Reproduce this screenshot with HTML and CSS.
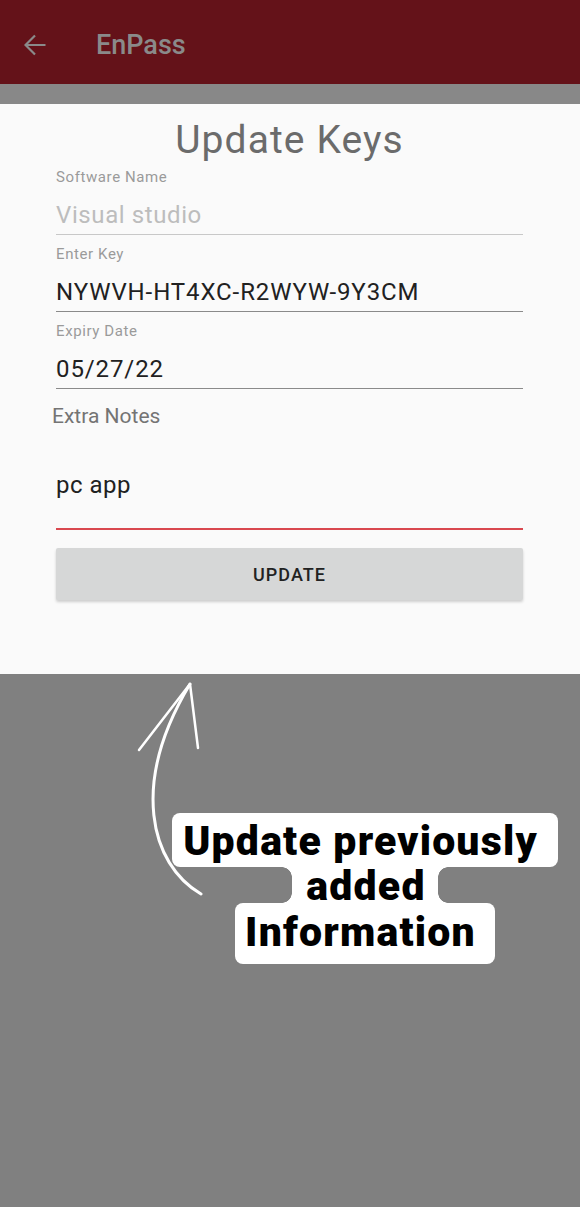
FILE: index.html
```html
<!DOCTYPE html>
<html>
<head>
<meta charset="utf-8">
<link rel="stylesheet" href="styles.css">
</head>
<body>
<div class="screen">
  <header class="appbar">
    <svg class="back" width="22" height="22" viewBox="0 0 22 22"><path d="M21.5 11H2M11 1.5L1.5 11l9.5 9.5" fill="none" stroke="#8a8a8a" stroke-width="2.2"/></svg>
    <span class="appbar-title">EnPass</span>
  </header>
  <div class="band"></div>
  <main class="card">
    <h1 class="title">Update Keys</h1>
    <div class="field">
      <div class="label">Software Name</div>
      <div class="value hint">Visual studio</div>
    </div>
    <div class="field">
      <div class="label">Enter Key</div>
      <div class="value">NYWVH-HT4XC-R2WYW-9Y3CM</div>
    </div>
    <div class="field">
      <div class="label">Expiry Date</div>
      <div class="value">05/27/22</div>
    </div>
    <div class="notes-label">Extra Notes</div>
    <div class="notes-value">pc app</div>
    <button class="btn">UPDATE</button>
  </main>
  <section class="backdrop">
    <svg class="pointer" width="580" height="533" viewBox="0 0 580 533">
      <path d="M201 220 C150 190, 130 110, 190 10" fill="none" stroke="#fff" stroke-width="3" stroke-linecap="round"/>
      <path d="M190 10 L139 76 M190 10 L198 74" fill="none" stroke="#fff" stroke-width="2.5" stroke-linecap="round"/>
    </svg>
    <div class="callout">
      <span class="line l1">Update previously</span>
      <span class="line l2">added</span>
      <span class="line l3">Information</span>
    </div>
  </section>
</div>
</body>
</html>
```
FILE: styles.css
```css
* { box-sizing: border-box; }
html, body { margin: 0; padding: 0; }
body {
  width: 580px;
  height: 1207px;
  background: #808080;
  font-family: Roboto, "Noto Sans", sans-serif;
  overflow: hidden;
}
.screen { display: flex; flex-direction: column; height: 1207px; }
.appbar {
  height: 84px;
  background: #641219;
  display: flex;
  align-items: center;
  padding-left: 24px;
  flex-shrink: 0;
}
.back { display: block; margin-top: 6px; }
.appbar-title {
  margin-left: 50px;
  margin-top: 6px;
  font-size: 27px;
  font-weight: 500;
  color: #8a8a8a;
}
.band { height: 20px; background: #888888; flex-shrink: 0; }
.card {
  background: #fafafa;
  height: 570px;
  flex-shrink: 0;
  padding: 16px 57px 0 56px;
  display: flex;
  flex-direction: column;
}
.title {
  margin: 0 0 7px;
  height: 40px;
  font-size: 39px;
  line-height: 40px;
  font-weight: 400;
  color: #6b6b6b;
  text-align: center;
  letter-spacing: 1.1px;
}
.field {
  margin-bottom: 9px;
  border-bottom: 1px solid #8a8a8a;
  padding-bottom: 4px;
}
.field:first-of-type { border-bottom-color: #c8c8c8; }
.label {
  font-size: 15px;
  line-height: 20px;
  color: #9a9a9a;
  letter-spacing: 0.6px;
}
.value {
  margin-top: 13px;
  font-size: 24px;
  line-height: 30px;
  color: #212121;
  letter-spacing: 0.9px;
}
.value.hint { color: #bdbdbd; letter-spacing: 0.6px; }
.notes-label {
  margin-left: -4px;
  margin-top: 5px;
  font-size: 21px;
  line-height: 26px;
  color: #747474;
}
.notes-value {
  margin-top: 41px;
  font-size: 24px;
  line-height: 30px;
  color: #212121;
  letter-spacing: 0.5px;
  padding-bottom: 28px;
  border-bottom: 2px solid #d9484f;
}
.btn {
  margin-top: 18px;
  height: 52px;
  border: 0;
  border-radius: 2px;
  background: #d6d7d7;
  box-shadow: 0 2px 3px rgba(0,0,0,0.18);
  font-family: Roboto, sans-serif;
  font-size: 18px;
  font-weight: 500;
  color: #222;
  letter-spacing: 1px;
}
.backdrop {
  flex: 1;
  position: relative;
}
.pointer { position: absolute; left: 0; top: 0; }
.callout {
  position: absolute;
  top: 139px;
  left: 165px;
  width: 400px;
  display: flex;
  flex-direction: column;
  align-items: center;
}
.line {
  display: block;
  position: relative;
  background: #fff;
  color: #000;
  font-weight: 900;
  font-size: 41px;
  letter-spacing: 1.2px;
  white-space: nowrap;
  padding: 0 20px 0 11px;
}
.l1 { height: 54px; line-height: 56px; border-radius: 8px; }
.l2 { height: 36px; line-height: 38px; padding: 0 12px 0 14px; }
.l3 { height: 61px; line-height: 58px; border-radius: 8px; padding: 0 19px 0 10px; }
.l2::before,
.l2::after {
  content: "";
  position: absolute;
  top: 0;
  width: 10px;
  height: 100%;
}
.l2::before {
  left: -10px;
  background:
    radial-gradient(circle at 0 100%, transparent 9.5px, #fff 10px) top left / 10px 10px no-repeat,
    radial-gradient(circle at 0 0, transparent 9.5px, #fff 10px) bottom left / 10px 10px no-repeat;
}
.l2::after {
  right: -10px;
  background:
    radial-gradient(circle at 100% 100%, transparent 9.5px, #fff 10px) top right / 10px 10px no-repeat,
    radial-gradient(circle at 100% 0, transparent 9.5px, #fff 10px) bottom right / 10px 10px no-repeat;
}
```
